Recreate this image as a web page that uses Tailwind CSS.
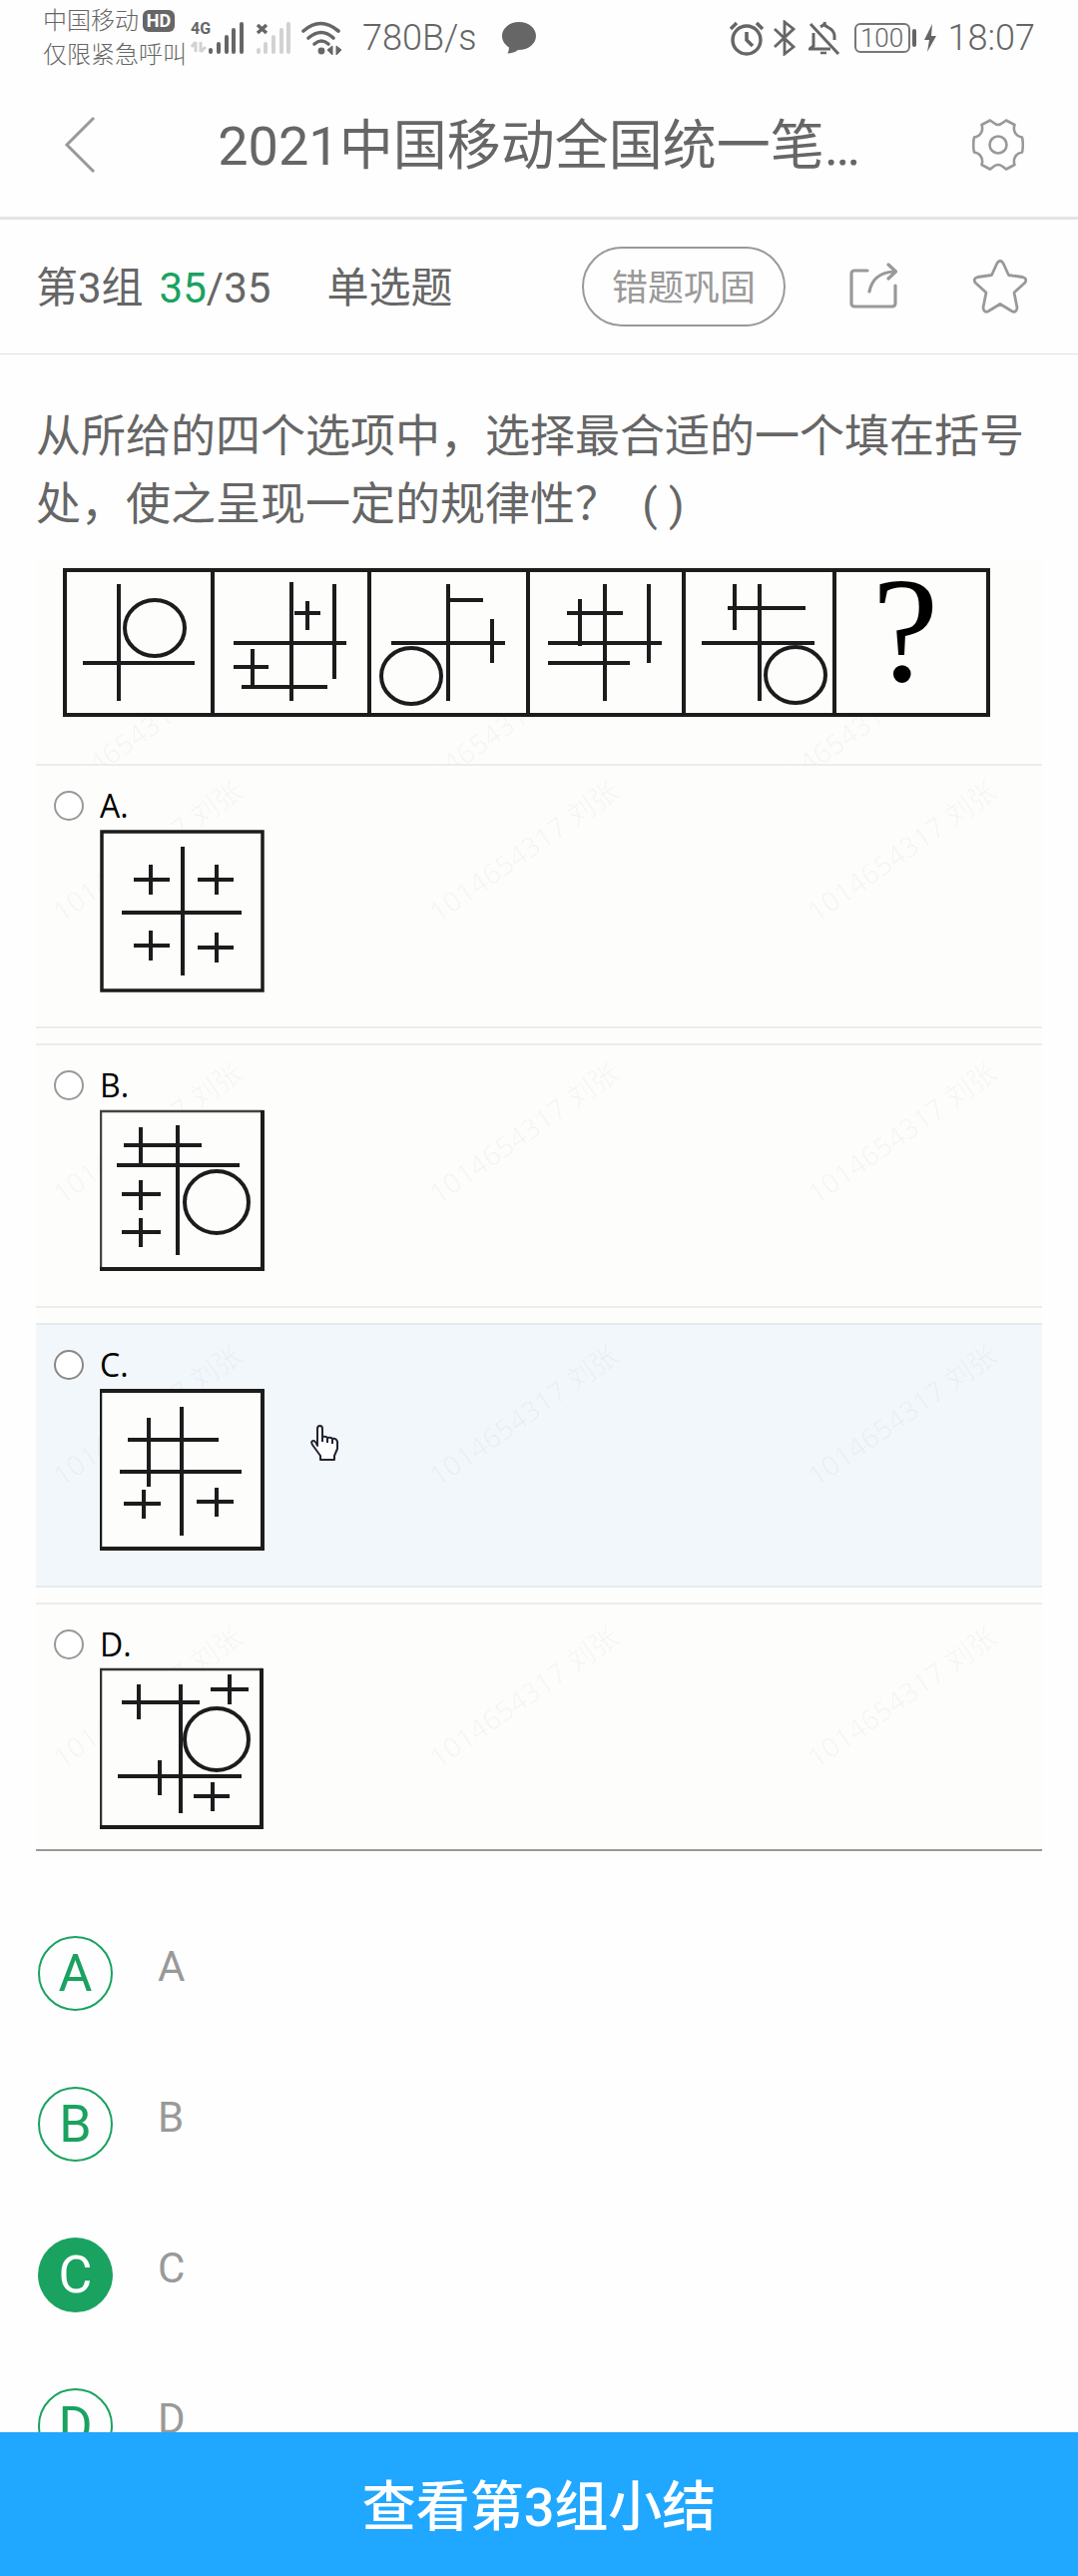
<!DOCTYPE html>
<html lang="zh-CN">
<head>
<meta charset="utf-8">
<meta name="viewport" content="width=device-width, initial-scale=1">
<title>2021中国移动全国统一笔试</title>
<script src="https://cdn.jsdelivr.net/npm/@tailwindcss/browser@4"></script>
</head>
<body class="flex h-screen flex-col overflow-hidden bg-[#fefefe] font-['Roboto','Noto_Sans_CJK_SC',sans-serif] text-[#666]">

<!-- Status bar -->
<div class="flex h-[72px] shrink-0 items-center justify-between pt-1 pr-[43px] pl-[43px]">
  <div class="flex items-center">
    <div class="text-[24px] leading-[34px] font-light whitespace-nowrap">
      <div class="flex items-center gap-1">中国移动<span class="flex h-[22px] w-[32px] items-center justify-center rounded-md bg-[#666] text-[18px] font-bold text-white">HD</span></div>
      <div>仅限紧急呼叫</div>
    </div>
    <svg class="ml-1 h-[36px] w-[54px]" viewBox="0 0 54 36" aria-label="4G 信号">
      <text x="0" y="14" font-size="16" font-weight="700" fill="#666">4G</text>
      <path d="M5 22v10M1 27l4-5M10 22v10M10 32l5-5" stroke="#d2d2d2" stroke-width="3" fill="none"/>
      <g stroke="#666" stroke-width="4" stroke-linecap="round"><path d="M20 30v2M28 24v8M36 17v15M43 10v22M51 4v28"/></g>
    </svg>
    <svg class="ml-[10px] h-[36px] w-[38px]" viewBox="0 0 38 36" aria-label="无信号">
      <path d="M3 5l9 8M12 5l-9 8" stroke="#666" stroke-width="3.5"/>
      <g stroke="#d2d2d2" stroke-width="4" stroke-linecap="round"><path d="M4 30v2M11 24v8M19 17v15M27 10v22M34 4v28"/></g>
    </svg>
    <svg class="ml-2 h-[36px] w-[42px]" viewBox="0 0 42 36" aria-label="无线网络">
      <g fill="none" stroke="#666" stroke-width="3.6" stroke-linecap="round"><path d="M3 11q17-15 35 0"/><path d="M8 18q13-11 25 0"/><path d="M14 24q7-6 14 0"/></g>
      <circle cx="21" cy="31" r="3.4" fill="#666"/>
      <path d="M32 26v9l-5-5zM36 26v9l5-5z" fill="#666" stroke="#666"/>
    </svg>
    <span class="ml-5 text-[36px] leading-[36px] font-light">780B/s</span>
    <svg class="ml-6 h-[34px] w-[36px]" viewBox="0 0 36 34" aria-label="消息"><path d="M18 1C8.600 1 1 7.200 1 15c0 5 3 9 7 11.500-.2 2.500-.5 4-1.500 6 4 0 8-1.500 10.500-3.500C27 29.300 35 23 35 15S27.400 1 18 1z" fill="#666"/></svg>
  </div>
  <div class="flex items-center">
    <svg class="h-[36px] w-[36px]" viewBox="0 0 36 36" fill="none" stroke="#666" aria-label="闹钟"><circle cx="18" cy="20" r="14" stroke-width="3.400"/><path d="M18 12v8l6 6" stroke-width="3.600"/><path d="M2 9l6-6M34 9l-6-6" stroke-width="3.500"/></svg>
    <svg class="ml-2 h-[36px] w-[24px]" viewBox="0 0 24 36" fill="none" stroke="#666" stroke-width="2.800" aria-label="蓝牙"><path d="M2 9l19 18-9 7V2l9 7L2 27"/></svg>
    <svg class="ml-3 h-[36px] w-[32px]" viewBox="0 0 32 36" fill="none" stroke="#666" stroke-width="3" aria-label="静音"><path d="M2 4l28 30"/><path d="M5 13v13l-4 3h21"/><path d="M12 7l3-2c2 1 1-3 1-3M16 3q0 3 3 4c4 2 7 4 7 9v4"/><path d="M12 33h6" stroke-width="2.500"/></svg>
    <span class="ml-[14px] flex h-[30px] w-[56px] items-center justify-center rounded-md border-2 border-[#777] text-[26px] leading-none font-light">100</span>
    <span class="ml-0.5 h-[18px] w-1 rounded bg-[#666]"></span>
    <svg class="ml-2 h-[28px] w-[12px]" viewBox="0 0 12 28" aria-label="充电中"><path d="M8 0L0 16h5L3 28l9-16H7z" fill="#666"/></svg>
    <span class="ml-3 text-[36px] leading-[36px] font-light">18:07</span>
  </div>
</div>

<!-- Title bar -->
<header class="flex h-[148px] shrink-0 items-center border-b-[3px] border-[#e4e4e4] px-[54px]">
  <button type="button" aria-label="返回" class="flex w-[52px] shrink-0 justify-center">
    <svg class="h-[58px] w-[32px]" viewBox="0 0 32 58" fill="none" stroke="#999" stroke-width="3"><path d="M30 2L3 29l27 27"/></svg>
  </button>
  <h1 class="min-w-0 flex-1 truncate pt-1 text-center text-[54px] leading-[72px]">2021中国移动全国统一笔…</h1>
  <button type="button" aria-label="设置" class="w-[52px] shrink-0">
    <svg class="h-[52px] w-[52px]" viewBox="0 0 52 52" fill="none" stroke="#999" stroke-width="2.600" stroke-linejoin="round"><path d="M26 6C29 6 31 3.500 34 1.500L42.500 6C41 10 42 17 50 18.500C51 23 51 29 50 33.500C42 35 41 42 42.500 46L34 50.500C31 48 29 46 26 46C23 46 21 48 18 50.500L9.500 46C11 42 10 35 2 33.500C1 29 1 23 2 18.500C10 17 11 10 9.500 6L18 1.500C21 3.500 23 6 26 6Z"/><circle cx="26" cy="26" r="8.500"/></svg>
  </button>
</header>

<!-- Progress and actions -->
<div class="flex h-[135px] shrink-0 items-center border-b border-[#e2e2e2] pr-[51px] pl-9 text-[42px] leading-[60px]">
  <p class="flex pt-1">
    <span>第3组</span>
    <span class="ml-4"><span class="text-[#1aa260]">35</span>/35</span>
    <span class="ml-14">单选题</span>
  </p>
  <button type="button" class="ml-auto h-[80px] w-[204px] rounded-full border-2 border-[#999] pt-1 text-[36px] text-[#999]">错题巩固</button>
  <button type="button" aria-label="分享" class="ml-16">
    <svg class="h-[48px] w-[48px]" viewBox="0 0 48 48" fill="none" stroke="#999" stroke-width="3.200" stroke-linecap="round" stroke-linejoin="round"><path d="M18 8H5a3 3 0 0 0-3 3v30a3 3 0 0 0 3 3h38a3 3 0 0 0 3-3V23"/><path d="M20 29C22 19 29 9 46 9M39 2l7.500 7-7.500 7"/></svg>
  </button>
  <button type="button" aria-label="收藏" class="ml-[76px]">
    <svg class="h-[54px] w-[54px]" viewBox="0 0 54 54" fill="none" stroke="#999" stroke-width="2.800" stroke-linejoin="round"><path d="M24 3.500Q27-1 30 3.500L35.500 15.500L49.500 17.500Q55 19.500 51.500 23.500L41 33L44 48Q43.500 54 38.500 51.500L27 44.500L15.500 51.500Q10.500 54 10 48L13 33L2.500 23.500Q-1 19.500 4.500 17.500L18.500 15.500Z"/></svg>
  </button>
</div>

<main class="min-h-0 flex-1 overflow-y-auto px-9 pt-[49px] [scrollbar-width:none]">
  <p class="text-[45px] leading-[68px]">从所给的四个选项中，选择最合适的一个填在括号处，使之呈现一定的规律性？&nbsp;&nbsp;( )</p>

  <section class="mt-5 bg-[#fdfdfc]">
    <!-- Pattern sequence -->
    <svg class="block w-full" viewBox="0 0 1008 205" fill="none" stroke="#1c1c1c" stroke-width="4" role="img" aria-label="图形序列">
      <g fill="#000" fill-opacity=".03" stroke="none" font-size="28" font-family="Noto Sans, Noto Sans CJK SC, sans-serif">
        <text transform="translate(22 244) rotate(-35)">1014654317 刘张</text>
        <text transform="translate(377 244) rotate(-35)">1014654317 刘张</text>
        <text transform="translate(734 244) rotate(-35)">1014654317 刘张</text>
      </g>
      <path d="M29 11H954V156H29ZM177 11V156M334 11V156M493 11V156M649 11V156M800 11V156" fill="#fdfdfc"/>
      <path d="M83 25V142M47 104H159"/><ellipse cx="119" cy="69" rx="30" ry="28"/>
      <path d="M256 23V142M299 25V120M198 84H311M272 42V71M259 54H285M217 90V128M198 108H233M206 128H292"/>
      <path d="M413 25V142M413 41H448M356 84H470M457 60V104"/><ellipse cx="376" cy="117" rx="30" ry="28"/>
      <path d="M570 25V142M614 25V104M545 40V87M532 54H588M513 84H627M513 104H595"/>
      <path d="M700 25V71M725 25V142M693 49H771M667 84H780"/><ellipse cx="761" cy="116" rx="30" ry="28"/>
      <text x="871" y="122" text-anchor="middle" font-family="Liberation Serif, serif" font-size="150" fill="#000" stroke="none">?</text>
    </svg>

    <div class="flex flex-col gap-[15px]">
      <div class="relative flex items-start gap-4 border-y-2 border-[#ececec] pt-[25px] pb-[34px] pl-[18px]">
        <svg class="absolute inset-0 h-full w-full" viewBox="0 0 1008 261" fill="#000" fill-opacity=".03" font-size="28" font-family="Noto Sans, Noto Sans CJK SC, sans-serif" aria-hidden="true"><text transform="translate(26 158) rotate(-35)">1014654317 刘张</text><text transform="translate(403 158) rotate(-35)">1014654317 刘张</text><text transform="translate(782 158) rotate(-35)">1014654317 刘张</text></svg>
        <input id="pic-a" type="radio" name="picture" class="relative size-[30px] appearance-none rounded-full border-2 border-[#999] bg-white">
        <label for="pic-a" class="relative font-['Open_Sans',sans-serif] text-[32px] leading-[30px] text-black">A.
          <svg class="mt-2 block h-[164px] w-[168px]" viewBox="0 0 168 164" fill="none" stroke="#1c1c1c" stroke-width="4">
            <rect x="2" y="3" width="161" height="159" stroke-width="3.500" fill="#fdfdfc"/>
            <path d="M83 18V147M22 84H142M51 36V66M34 51H70M117 36V66M98 51H134M51 102V132M34 117H70M117 104V134M98 119H134"/>
          </svg>
        </label>
      </div>
      <div class="relative flex items-start gap-4 border-y-2 border-[#ececec] pt-[25px] pb-[34px] pl-[18px]">
        <svg class="absolute inset-0 h-full w-full" viewBox="0 0 1008 261" fill="#000" fill-opacity=".03" font-size="28" font-family="Noto Sans, Noto Sans CJK SC, sans-serif" aria-hidden="true"><text transform="translate(26 160) rotate(-35)">1014654317 刘张</text><text transform="translate(403 160) rotate(-35)">1014654317 刘张</text><text transform="translate(782 160) rotate(-35)">1014654317 刘张</text></svg>
        <input id="pic-b" type="radio" name="picture" class="relative size-[30px] appearance-none rounded-full border-2 border-[#999] bg-white">
        <label for="pic-b" class="relative font-['Open_Sans',sans-serif] text-[32px] leading-[30px] text-black">B.
          <svg class="mt-2 block h-[164px] w-[168px]" viewBox="0 0 168 164" fill="none" stroke="#1c1c1c" stroke-width="4">
            <path d="M1 3H163V161H1Z" fill="#fdfdfc" stroke="none"/><path d="M1 162V3H163" stroke="#444" stroke-width="2.500"/><path d="M163 2V161H0"/>
            <path d="M41 19V57M24 37H102M78 17V147M17 57H140M41 72V102M22 86H61M41 110V139M22 124H61"/><ellipse cx="117" cy="94" rx="32" ry="31"/>
          </svg>
        </label>
      </div>
      <div class="relative flex items-start gap-4 border-y-2 border-[#e6eaeb] bg-[#f1f7fb] pt-[25px] pb-[34px] pl-[18px]">
        <svg class="absolute inset-0 h-full w-full" viewBox="0 0 1008 261" fill="#000" fill-opacity=".03" font-size="28" font-family="Noto Sans, Noto Sans CJK SC, sans-serif" aria-hidden="true"><text transform="translate(26 163) rotate(-35)">1014654317 刘张</text><text transform="translate(403 163) rotate(-35)">1014654317 刘张</text><text transform="translate(782 163) rotate(-35)">1014654317 刘张</text></svg>
        <input id="pic-c" type="radio" name="picture" class="relative size-[30px] appearance-none rounded-full border-2 border-[#888] bg-white">
        <label for="pic-c" class="relative font-['Open_Sans',sans-serif] text-[32px] leading-[30px] text-black">C.
          <svg class="mt-2 block h-[164px] w-[168px]" viewBox="0 0 168 164" fill="none" stroke="#1c1c1c" stroke-width="4">
            <path d="M1 3H163V161H1Z" fill="#fdfdfc" stroke="none"/><path d="M1 162V3" stroke-width="2.500"/><path d="M0 3H163V161H0"/>
            <path d="M49 30V99M28 52H119M82 19V148M20 84H142M44 102V131M24 116H61M117 100V129M97 114H134"/>
          </svg>
        </label>
        <!-- Hand pointer -->
        <svg class="absolute top-[100px] left-[275px] h-[36px] w-[28px]" viewBox="0 0 28 36" fill="#fff" stroke="#223" stroke-width="2" stroke-linejoin="round" aria-hidden="true"><path d="M7 21V4q0-3 2.500-3T12 4v8q4-1 5 1 4-1 5 1 4-1 5 3v7l-3 7v4H10v-4L2 20q-2-4 1-4 2 0 4 5z"/><path d="M12 10v7M17 13v5M22 14v5" fill="none"/></svg>
      </div>
      <div class="relative flex items-start gap-4 border-y-2 border-t-[#ececec] border-b-[#999] pt-[25px] pb-[18px] pl-[18px]">
        <svg class="absolute inset-x-0 top-0 w-full" viewBox="0 0 1008 244" fill="#000" fill-opacity=".03" font-size="28" font-family="Noto Sans, Noto Sans CJK SC, sans-serif" aria-hidden="true"><text transform="translate(26 165) rotate(-35)">1014654317 刘张</text><text transform="translate(403 165) rotate(-35)">1014654317 刘张</text><text transform="translate(782 165) rotate(-35)">1014654317 刘张</text></svg>
        <input id="pic-d" type="radio" name="picture" class="relative size-[30px] appearance-none rounded-full border-2 border-[#999] bg-white">
        <label for="pic-d" class="relative font-['Open_Sans',sans-serif] text-[32px] leading-[30px] text-black">D.
          <svg class="mt-2 block h-[164px] w-[168px]" viewBox="0 0 168 164" fill="none" stroke="#1c1c1c" stroke-width="4">
            <path d="M1 2H163V160H1Z" fill="#fdfdfc" stroke="none"/><path d="M1 161V2H163" stroke="#333" stroke-width="2.500"/><path d="M162 1V160H0"/>
            <path d="M39 17V52M22 35H100M81 17V146M130 7V37M111 22H149M18 109H142M60 93V128M113 115V144M94 129H130"/><ellipse cx="117" cy="72" rx="32" ry="31"/>
          </svg>
        </label>
      </div>
    </div>
  </section>

  <!-- Answer choices -->
  <fieldset class="mt-[85px] flex flex-col gap-[76px] pb-9 pl-0.5 text-[42px] leading-[62px] text-[#999]">
    <label class="flex items-start gap-[45px]"><input type="radio" name="answer" value="A" class="sr-only"><span class="flex size-[75px] items-center justify-center rounded-full border-2 border-[#1aa260] text-[52px] text-[#1aa260]">A</span>A</label>
    <label class="flex items-start gap-[45px]"><input type="radio" name="answer" value="B" class="sr-only"><span class="flex size-[75px] items-center justify-center rounded-full border-2 border-[#1aa260] text-[52px] text-[#1aa260]">B</span>B</label>
    <label class="flex items-start gap-[45px]"><input type="radio" name="answer" value="C" checked class="sr-only"><span class="flex size-[75px] items-center justify-center rounded-full bg-[#1aa260] text-[52px] text-white">C</span>C</label>
    <label class="flex items-start gap-[45px]"><input type="radio" name="answer" value="D" class="sr-only"><span class="flex size-[75px] items-center justify-center rounded-full border-2 border-[#1aa260] text-[52px] text-[#1aa260]">D</span>D</label>
  </fieldset>
</main>

<button type="button" class="h-[144px] w-full shrink-0 bg-[#20a7ff] pt-1.5 text-[54px] font-medium text-white">查看第3组小结</button>
</body>
</html>
